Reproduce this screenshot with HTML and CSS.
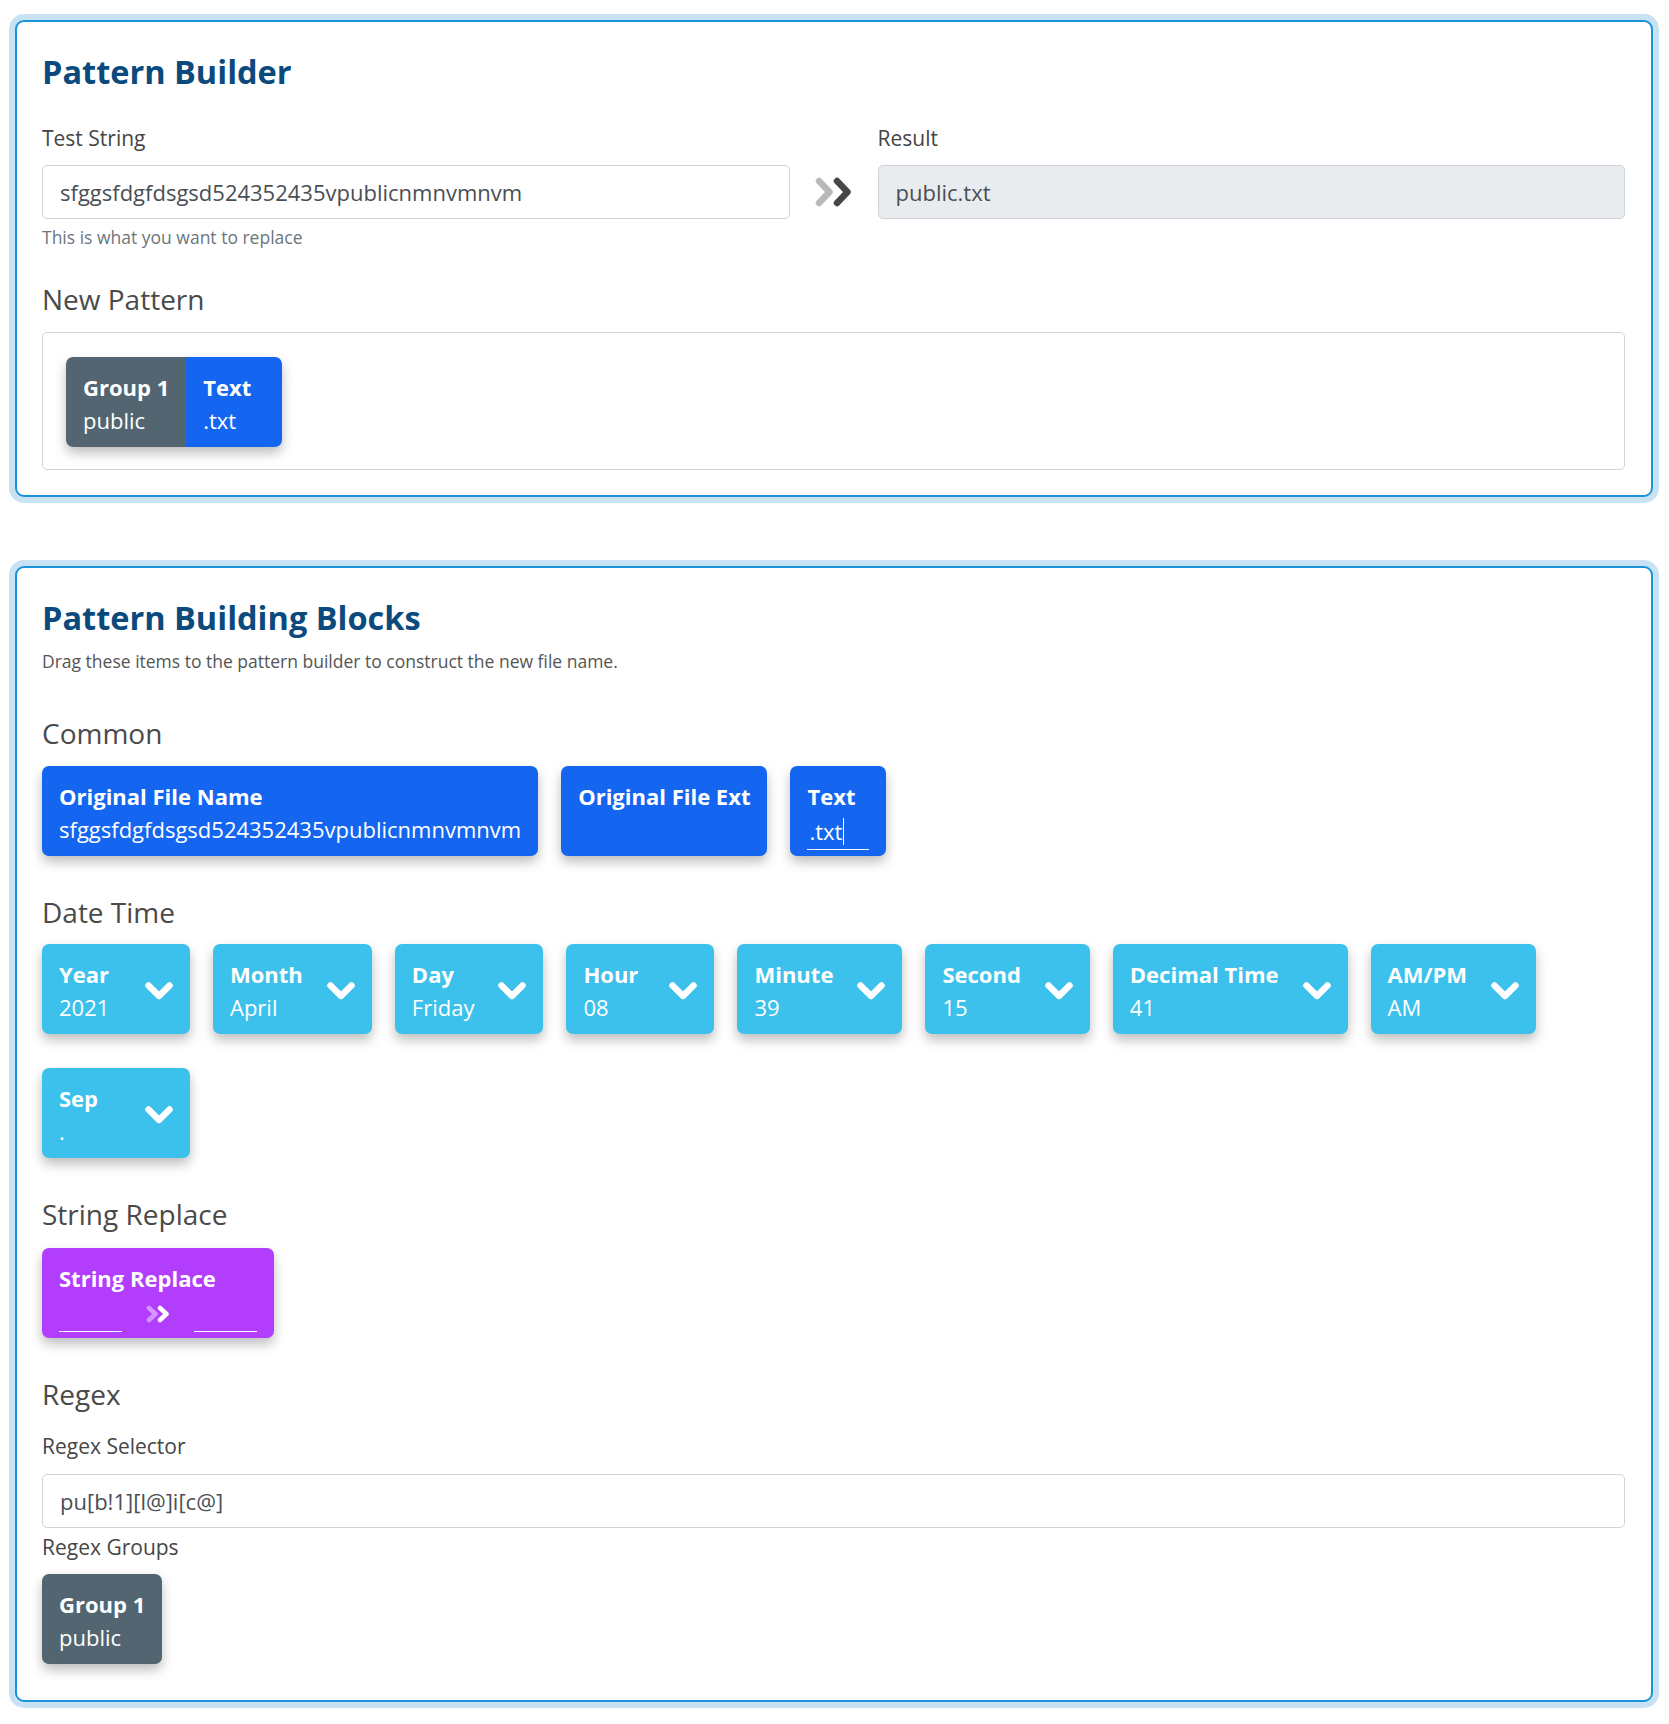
FILE: index.html
```html
<!DOCTYPE html>
<html lang="en">
<head>
<meta charset="utf-8">
<title>Pattern Builder</title>
<link rel="stylesheet" href="styles.css">
</head>
<body>
<div class="page">
  <section class="card card-builder">
    <h2 class="card-title">Pattern Builder</h2>
    <div class="test-grid">
      <div class="field">
        <label class="field-label">Test String</label>
        <div class="input">sfggsfdgfdsgsd524352435vpublicnmnvmnvm</div>
        <div class="help">This is what you want to replace</div>
      </div>
      <div class="arrow">
        <svg width="38" height="30" viewBox="0 0 38 30" aria-hidden="true">
          <polyline points="4,4 14.5,15 4,26" fill="none" stroke="#b8b8b8" stroke-width="6.5" stroke-linecap="round" stroke-linejoin="round"/>
          <polyline points="22,4 32.5,15 22,26" fill="none" stroke="#474747" stroke-width="6.5" stroke-linecap="round" stroke-linejoin="round"/>
        </svg>
      </div>
      <div class="field">
        <label class="field-label">Result</label>
        <div class="input input-readonly">public.txt</div>
      </div>
    </div>
    <h4 class="section-title section-title-pattern">New Pattern</h4>
    <div class="pattern-box">
      <div class="chip-combo">
        <div class="chip chip-secondary">
          <span class="chip-title">Group 1</span>
          <span class="chip-value">public</span>
        </div>
        <div class="chip chip-primary">
          <span class="chip-title">Text</span>
          <span class="chip-value chip-value-input">.txt</span>
        </div>
      </div>
    </div>
  </section>

  <section class="card card-blocks">
    <h2 class="card-title">Pattern Building Blocks</h2>
    <p class="subtitle">Drag these items to the pattern builder to construct the new file name.</p>

    <h4 class="section-title section-title-first">Common</h4>
    <div class="chip-row">
      <div class="chip chip-primary">
        <span class="chip-title">Original File Name</span>
        <span class="chip-value">sfggsfdgfdsgsd524352435vpublicnmnvmnvm</span>
      </div>
      <div class="chip chip-primary">
        <span class="chip-title">Original File Ext</span>
      </div>
      <div class="chip chip-primary chip-editable">
        <span class="chip-title">Text</span>
        <div class="chip-input">.txt<span class="caret"></span></div>
      </div>
    </div>

    <h4 class="section-title section-title-tight">Date Time</h4>
    <div class="chip-row">
      <div class="chip chip-info chip-select">
        <div class="chip-text"><span class="chip-title">Year</span><span class="chip-value">2021</span></div>
        <svg class="chevron" width="30" height="20" viewBox="0 0 30 20" aria-hidden="true"><polyline points="4.5,4.5 15,15 25.5,4.5" fill="none" stroke="#fff" stroke-width="6.5" stroke-linecap="round" stroke-linejoin="round"/></svg>
      </div>
      <div class="chip chip-info chip-select">
        <div class="chip-text"><span class="chip-title">Month</span><span class="chip-value">April</span></div>
        <svg class="chevron" width="30" height="20" viewBox="0 0 30 20" aria-hidden="true"><polyline points="4.5,4.5 15,15 25.5,4.5" fill="none" stroke="#fff" stroke-width="6.5" stroke-linecap="round" stroke-linejoin="round"/></svg>
      </div>
      <div class="chip chip-info chip-select">
        <div class="chip-text"><span class="chip-title">Day</span><span class="chip-value">Friday</span></div>
        <svg class="chevron" width="30" height="20" viewBox="0 0 30 20" aria-hidden="true"><polyline points="4.5,4.5 15,15 25.5,4.5" fill="none" stroke="#fff" stroke-width="6.5" stroke-linecap="round" stroke-linejoin="round"/></svg>
      </div>
      <div class="chip chip-info chip-select">
        <div class="chip-text"><span class="chip-title">Hour</span><span class="chip-value">08</span></div>
        <svg class="chevron" width="30" height="20" viewBox="0 0 30 20" aria-hidden="true"><polyline points="4.5,4.5 15,15 25.5,4.5" fill="none" stroke="#fff" stroke-width="6.5" stroke-linecap="round" stroke-linejoin="round"/></svg>
      </div>
      <div class="chip chip-info chip-select">
        <div class="chip-text"><span class="chip-title">Minute</span><span class="chip-value">39</span></div>
        <svg class="chevron" width="30" height="20" viewBox="0 0 30 20" aria-hidden="true"><polyline points="4.5,4.5 15,15 25.5,4.5" fill="none" stroke="#fff" stroke-width="6.5" stroke-linecap="round" stroke-linejoin="round"/></svg>
      </div>
      <div class="chip chip-info chip-select">
        <div class="chip-text"><span class="chip-title">Second</span><span class="chip-value">15</span></div>
        <svg class="chevron" width="30" height="20" viewBox="0 0 30 20" aria-hidden="true"><polyline points="4.5,4.5 15,15 25.5,4.5" fill="none" stroke="#fff" stroke-width="6.5" stroke-linecap="round" stroke-linejoin="round"/></svg>
      </div>
      <div class="chip chip-info chip-select">
        <div class="chip-text"><span class="chip-title">Decimal Time</span><span class="chip-value">41</span></div>
        <svg class="chevron" width="30" height="20" viewBox="0 0 30 20" aria-hidden="true"><polyline points="4.5,4.5 15,15 25.5,4.5" fill="none" stroke="#fff" stroke-width="6.5" stroke-linecap="round" stroke-linejoin="round"/></svg>
      </div>
      <div class="chip chip-info chip-select">
        <div class="chip-text"><span class="chip-title">AM/PM</span><span class="chip-value">AM</span></div>
        <svg class="chevron" width="30" height="20" viewBox="0 0 30 20" aria-hidden="true"><polyline points="4.5,4.5 15,15 25.5,4.5" fill="none" stroke="#fff" stroke-width="6.5" stroke-linecap="round" stroke-linejoin="round"/></svg>
      </div>
      <div class="chip chip-info chip-select">
        <div class="chip-text"><span class="chip-title">Sep</span><span class="chip-value">.</span></div>
        <svg class="chevron" width="30" height="20" viewBox="0 0 30 20" aria-hidden="true"><polyline points="4.5,4.5 15,15 25.5,4.5" fill="none" stroke="#fff" stroke-width="6.5" stroke-linecap="round" stroke-linejoin="round"/></svg>
      </div>
    </div>

    <h4 class="section-title">String Replace</h4>
    <div class="chip-row">
      <div class="chip chip-purple chip-editable">
        <span class="chip-title">String Replace</span>
        <div class="replace-row">
          <div class="chip-input chip-input-wide"></div>
          <svg width="26" height="18" viewBox="0 0 26 18" aria-hidden="true">
            <polyline points="4,3 10.5,9 4,15" fill="none" stroke="#fff" stroke-opacity="0.45" stroke-width="4.5" stroke-linecap="round" stroke-linejoin="round"/>
            <polyline points="15,3 21.5,9 15,15" fill="none" stroke="#fff" stroke-width="4.5" stroke-linecap="round" stroke-linejoin="round"/>
          </svg>
          <div class="chip-input chip-input-wide"></div>
        </div>
      </div>
    </div>

    <h4 class="section-title section-title-regex">Regex</h4>
    <label class="field-label field-label-regex">Regex Selector</label>
    <div class="input">pu[b!1][l@]i[c@]</div>
    <label class="field-label field-label-after">Regex Groups</label>
    <div class="chip-row">
      <div class="chip chip-secondary">
        <span class="chip-title">Group 1</span>
        <span class="chip-value">public</span>
      </div>
    </div>
  </section>
</div>
</body>
</html>
```

FILE: styles.css
```css
html, body {
  margin: 0;
  padding: 0;
  background: #ffffff;
}

body {
  font-family: "Open Sans", "Liberation Sans", sans-serif;
  color: #454545;
}

.page {
  padding: 20px 16px 20px 15px;
}

.card {
  display: flex;
  flex-direction: column;
  align-items: stretch;
  border: 2px solid #1b93da;
  border-radius: 9px;
  box-shadow: 0 0 0 6px #c9e2f3;
  padding: 30px 26px 25px 25px;
  background: #ffffff;
}

.card + .card {
  margin-top: 69px;
}

.card-blocks {
  padding-bottom: 36px;
}

.card-title {
  margin: 0;
  font-size: 32.5px;
  line-height: 40px;
  font-weight: 700;
  color: #0a4a7c;
}

.test-grid {
  display: grid;
  grid-template-columns: 1fr 38px 1fr;
  column-gap: 25px;
  margin-top: 30px;
}

.field {
  display: flex;
  flex-direction: column;
  min-width: 0;
}

.field-label {
  display: block;
  font-size: 21px;
  line-height: 33px;
  margin-bottom: 10px;
  color: #454545;
}

.field-label-regex {
  margin-bottom: 11px;
}

.field-label-after {
  margin-top: 3px;
}

.input {
  box-sizing: border-box;
  height: 54px;
  border: 1px solid #ced4da;
  border-radius: 5px;
  padding: 0 17px;
  font-size: 22px;
  display: flex;
  align-items: center;
  color: #4a4f55;
  background: #ffffff;
}

.input-readonly {
  background: #e9ecef;
}

.help {
  margin-top: 6px;
  font-size: 17.5px;
  line-height: 25px;
  color: #6c757d;
}

.arrow {
  margin-top: 55px;
  height: 30px;
  display: flex;
  align-items: center;
}

.subtitle {
  margin: 11px 0 0;
  font-size: 17.5px;
  line-height: 25px;
  color: #555555;
}

.section-title {
  margin: 40px 0 18px;
  font-size: 28px;
  line-height: 32px;
  font-weight: 400;
  color: #4a4a4a;
}

.section-title-pattern {
  margin-top: 33px;
  margin-bottom: 17px;
}

.section-title-first {
  margin-top: 43px;
  margin-bottom: 17px;
}

.section-title-tight {
  margin-bottom: 16px;
}

.section-title-regex {
  margin-bottom: 20px;
}

.pattern-box {
  border: 1px solid #ced4da;
  border-radius: 5px;
  padding: 24px 23px 22px 23px;
  display: flex;
}

/* chips */
.chip-row {
  display: flex;
  flex-wrap: wrap;
  gap: 34px 23px;
  align-items: stretch;
}

.chip {
  box-sizing: border-box;
  display: flex;
  flex-direction: column;
  min-height: 90px;
  padding: 14px 17px 10px;
  border-radius: 7px;
  color: #ffffff;
  font-size: 22px;
  line-height: 33px;
  box-shadow: 0 6px 12px rgba(0, 0, 0, 0.26);
  white-space: nowrap;
}

.chip-title {
  font-weight: 700;
  font-size: 22px;
}

.chip-value {
  font-weight: 400;
}

.chip-value-input {
  min-width: 62px;
}

.chip-primary { background: #1466f1; }
.chip-secondary { background: #526570; }
.chip-info { background: #3cc1ed; }
.chip-purple { background: #b23dfd; }

.chip-combo {
  display: flex;
  border-radius: 7px;
  overflow: hidden;
  box-shadow: 0 6px 12px rgba(0, 0, 0, 0.26);
}

.chip-combo .chip {
  border-radius: 0;
  box-shadow: none;
}

.chip-select {
  flex-direction: row;
  align-items: center;
  gap: 23px;
  padding-right: 16px;
}

.chip-text {
  display: flex;
  flex-direction: column;
  min-width: 62px;
  align-self: flex-start;
}

.chevron {
  flex: none;
  display: block;
}

.chip-editable {
  padding-bottom: 4px;
}

.chip-input {
  box-sizing: border-box;
  width: 62px;
  height: 37px;
  border-bottom: 1px solid #ffffff;
  display: flex;
  align-items: center;
  padding-left: 2px;
}

.caret {
  display: inline-block;
  width: 1px;
  height: 27px;
  background: #ffffff;
  margin-left: 1px;
}

.replace-row {
  display: flex;
  align-items: center;
  gap: 23px;
}

.chip-input-wide {
  width: 63px;
}
```
